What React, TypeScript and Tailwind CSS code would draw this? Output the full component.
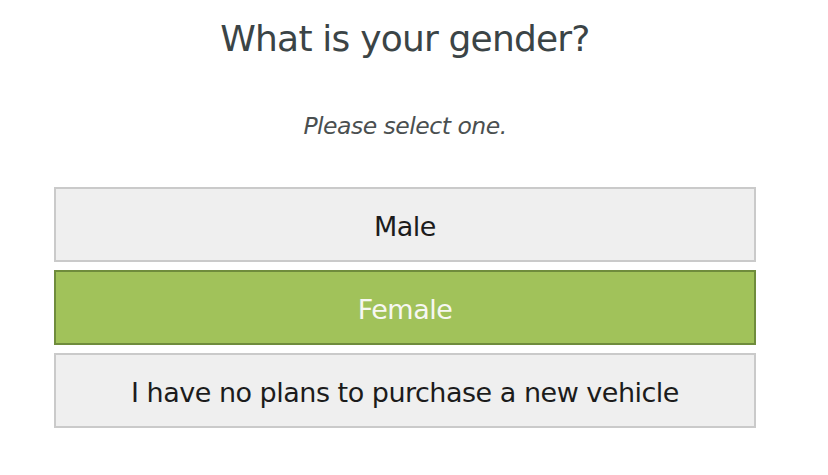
export default function App() {
  const options = ["Male", "Female", "I have no plans to purchase a new vehicle"];
  const selected = "Female";
  return (
    <div
      className="w-[828px] h-[475px] bg-white"
      style={{ fontFamily: '"DejaVu Sans", Verdana, sans-serif' }}
    >
      <div className="w-[810px] flex flex-col items-center">
        <h1 className="mt-[13px] text-[36px] leading-[52px] text-[#3b4446] tracking-[-0.8px]">
          What is your gender?
        </h1>
        <p className="mt-[46px] text-[23.5px] leading-[30px] italic text-[#4a4f50] tracking-[-0.5px]">
          Please select one.
        </p>
        <div className="mt-[46px] w-[702px] flex flex-col gap-[8px]">
          {options.map((o) => (
            <button
              key={o}
              className={
                o === selected
                  ? "h-[75px] pt-[6px] border-2 border-[#6f8c3c] bg-[#a1c25a] text-[#f7f7f2] text-[27px] tracking-[-0.5px]"
                  : "h-[75px] pt-[6px] border-2 border-[#cacaca] bg-[#efefef] text-[#1c1c1c] text-[27px] tracking-[-0.5px]"
              }
            >
              {o}
            </button>
          ))}
        </div>
      </div>
    </div>
  );
}
